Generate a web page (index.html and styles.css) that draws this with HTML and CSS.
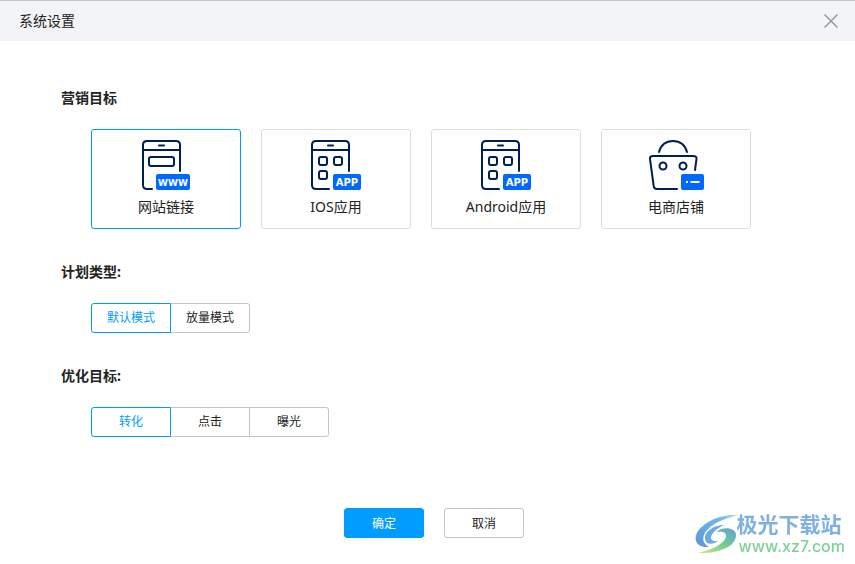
FILE: index.html
```html
<!DOCTYPE html>
<html lang="zh-CN">

<head>
    <meta charset="UTF-8">
    <meta name="viewport" content="width=device-width, initial-scale=1.0">
    <title>系统设置</title>
    <link rel="stylesheet" href="styles.css">
</head>

<body>
    <header class="dialog-header">
        <h1>系统设置</h1>
        <button type="button" class="close" aria-label="关闭">
            <svg width="14" height="14" viewBox="0 0 14 14">
                <path d="M0.5 0.5L13.5 13.5M13.5 0.5L0.5 13.5" />
            </svg>
        </button>
    </header>

    <form class="settings">
        <section>
            <h2 id="goal">营销目标</h2>
            <div class="cards" role="radiogroup" aria-labelledby="goal">
                <label class="card">
                    <input type="radio" name="goal" value="link" checked>
                    <svg class="icon" viewBox="0 0 56 50">
                        <path class="line" d="M14 49H9Q5 49 5 45V5Q5 1 9 1H38Q42 1 42 5V31M5 10H42M21 5.5H26" />
                        <rect class="line" x="11" y="17" width="25" height="9" rx="2" />
                        <rect class="badge" x="18" y="34" width="34" height="16" rx="2" />
                        <text class="badge-text" x="35" y="46">WWW</text>
                    </svg>
                    <span>网站链接</span>
                </label>
                <label class="card">
                    <input type="radio" name="goal" value="ios">
                    <svg class="icon" viewBox="0 0 56 50">
                        <path class="line" d="M21 49H8Q4 49 4 45V5Q4 1 8 1H37Q41 1 41 5V31M4 10H41M20 5.5H25" />
                        <rect class="line" x="11" y="17" width="8" height="8" rx="2" />
                        <rect class="line" x="26" y="17" width="8" height="8" rx="2" />
                        <rect class="line" x="11" y="31" width="8" height="8" rx="2" />
                        <rect class="badge" x="25" y="34" width="28" height="16" rx="2" />
                        <text class="badge-text app" x="39" y="46">APP</text>
                    </svg>
                    <span>IOS应用</span>
                </label>
                <label class="card">
                    <input type="radio" name="goal" value="android">
                    <svg class="icon" viewBox="0 0 56 50">
                        <path class="line" d="M21 49H8Q4 49 4 45V5Q4 1 8 1H37Q41 1 41 5V31M4 10H41M20 5.5H25" />
                        <rect class="line" x="11" y="17" width="8" height="8" rx="2" />
                        <rect class="line" x="26" y="17" width="8" height="8" rx="2" />
                        <rect class="line" x="11" y="31" width="8" height="8" rx="2" />
                        <rect class="badge" x="25" y="34" width="28" height="16" rx="2" />
                        <text class="badge-text app" x="39" y="46">APP</text>
                    </svg>
                    <span>Android应用</span>
                </label>
                <label class="card">
                    <input type="radio" name="goal" value="shop">
                    <svg class="icon" viewBox="0 0 56 50">
                        <path class="line" d="M11 12C13 5 18 1 25 1S37 5 39 12" />
                        <path class="line" d="M29 49H9Q6 49 5.7 46L2 19Q1.5 16 5 16H45Q49 16 48.5 19L47 30" />
                        <circle class="line" cx="15" cy="26" r="3.5" />
                        <circle class="line" cx="35" cy="26" r="3.5" />
                        <rect class="badge" x="33" y="34" width="23" height="16" rx="2" />
                        <path class="dash" d="M38 42H40M42.5 42H51.5" />
                    </svg>
                    <span>电商店铺</span>
                </label>
            </div>
        </section>

        <section>
            <h2 id="plan">计划类型:</h2>
            <div class="segments" role="radiogroup" aria-labelledby="plan">
                <label><input type="radio" name="plan" value="default" checked>默认模式</label>
                <label><input type="radio" name="plan" value="volume">放量模式</label>
            </div>
        </section>

        <section>
            <h2 id="target">优化目标:</h2>
            <div class="segments" role="radiogroup" aria-labelledby="target">
                <label><input type="radio" name="target" value="convert" checked>转化</label>
                <label><input type="radio" name="target" value="click">点击</label>
                <label><input type="radio" name="target" value="show">曝光</label>
            </div>
        </section>

        <div class="actions">
            <button type="submit" class="btn primary">确定</button>
            <button type="button" class="btn">取消</button>
        </div>
    </form>

    <div class="watermark">
        <svg width="44" height="42" viewBox="0 0 44 42">
            <defs>
                <linearGradient id="blue" x1="0" y1="1" x2="1" y2="0">
                    <stop offset="0" stop-color="#5b96d8" />
                    <stop offset="0.7" stop-color="#6db7ea" />
                    <stop offset="1" stop-color="#b9dfb0" />
                </linearGradient>
                <linearGradient id="green" x1="0" y1="1" x2="1" y2="0">
                    <stop offset="0" stop-color="#dce878" />
                    <stop offset="0.5" stop-color="#74cf8c" />
                    <stop offset="1" stop-color="#5f9fdc" />
                </linearGradient>
            </defs>
            <path fill="url(#blue)" d="M43 2C26 1 10 8 3 18C-3 28 3 35 14 34C6 30 7 22 13 16C20 9 32 5 43 2Z" />
            <path fill="#6fa9e2" d="M30 12C18 12 9 19 10 26C11 32 18 32 23 28C16 29 14 25 18 20C21 16 26 13 30 12Z" />
            <path fill="url(#green)" d="M21 19C27 13 41 14 41 22C41 34 23 41 2 40C17 37 29 31 31 24C32 19 27 18 21 19Z" />
        </svg>
        <div class="watermark-text">
            <span class="site-name">极光下载站</span>
            <span class="site-url">www.xz7.com</span>
        </div>
    </div>
</body>

</html>
```
FILE: styles.css
```css
* {
    box-sizing: border-box;
}

body {
    margin: 0;
    background-color: #fff;
    color: #222;
    font-family: "Noto Sans", "Noto Sans CJK SC", sans-serif;
    font-size: 14px;
    line-height: 20px;
}

.dialog-header {
    display: flex;
    justify-content: space-between;
    align-items: center;
    height: 41px;
    padding: 0 17px 0 19px;
    border-top: 1px solid #c6c7cb;
    background-color: #f3f4f7;
}

h1 {
    margin: 0;
    font-size: 14px;
    font-weight: normal;
}

.close {
    display: flex;
    padding: 0;
    border: none;
    background: none;
    cursor: pointer;
}

.close svg {
    fill: none;
    stroke: #999;
    stroke-width: 1.5;
}

.settings {
    padding: 47px 48px 26px 61px;
}

section {
    margin-bottom: 33px;
}

h2 {
    margin: 0 0 21px;
    font-size: 14px;
    font-weight: bold;
}

.cards {
    display: flex;
    gap: 20px;
    padding-left: 30px;
}

.card {
    display: flex;
    flex-direction: column;
    align-items: center;
    gap: 7px;
    width: 150px;
    height: 100px;
    padding-top: 10px;
    border: 1px solid #ddd;
    border-radius: 3px;
    cursor: pointer;
}

.card:has(input:checked) {
    border-color: #009dff;
}

input[type=radio] {
    position: absolute;
    margin: 0;
    appearance: none;
}

.icon {
    width: 56px;
    height: 50px;
}

.line {
    fill: none;
    stroke: #001f55;
    stroke-width: 2;
    stroke-linecap: round;
}

.badge {
    fill: #0068ff;
}

.badge-text {
    fill: #fff;
    font-family: "DejaVu Sans", sans-serif;
    font-size: 9px;
    font-weight: bold;
    text-anchor: middle;
}

.badge-text.app {
    font-size: 10px;
}

.dash {
    stroke: #fff;
    stroke-width: 2;
}

.segments {
    display: flex;
    padding-left: 30px;
}

.segments label {
    width: 80px;
    height: 30px;
    border: 1px solid #c4c5c7;
    font-size: 12px;
    line-height: 28px;
    text-align: center;
    cursor: pointer;
}

.segments label + label {
    margin-left: -1px;
}

.segments label:first-child {
    border-radius: 3px 0 0 3px;
}

.segments label:last-child {
    border-radius: 0 3px 3px 0;
}

.segments label:has(input:checked) {
    z-index: 1;
    border-color: #009dff;
    color: #009dff;
}

.actions {
    display: flex;
    justify-content: center;
    gap: 20px;
    padding-top: 38px;
}

.btn {
    width: 80px;
    height: 30px;
    padding: 0;
    border: 1px solid #c4c5c7;
    border-radius: 3px;
    background-color: #fff;
    color: #222;
    font-family: inherit;
    font-size: 12px;
    cursor: pointer;
}

.btn.primary {
    border-color: #009dff;
    background-color: #009dff;
    color: #fff;
}

/* site mark over the bottom right corner */
.watermark {
    position: fixed;
    right: 10px;
    bottom: 8px;
    display: flex;
    align-items: center;
}

.watermark-text {
    display: flex;
    flex-direction: column;
    margin-left: -2px;
}

.site-name {
    color: #7fb0e3;
    font-size: 21px;
    font-weight: bold;
    line-height: 24px;
}

.site-url {
    padding-left: 2px;
    color: #7dd196;
    font-family: Inter, "Liberation Sans", sans-serif;
    font-size: 16px;
    font-weight: 500;
    line-height: 20px;
}
```
